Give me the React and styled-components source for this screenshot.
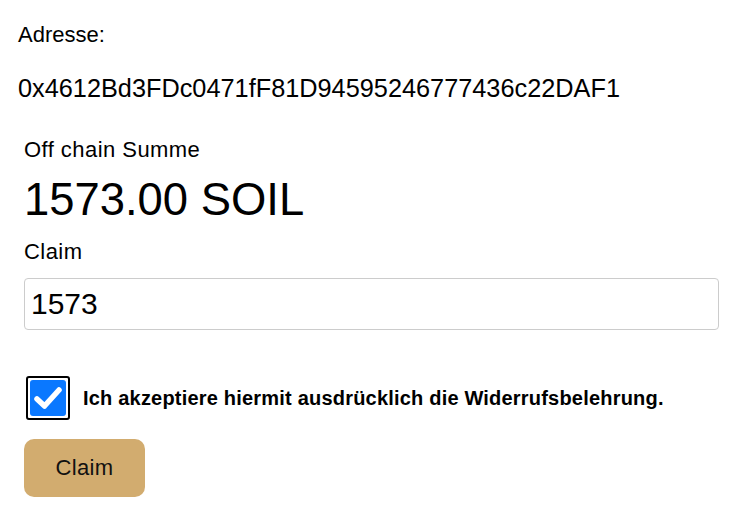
import { useState } from 'react';
import styled, { createGlobalStyle } from 'styled-components';

const GlobalStyle = createGlobalStyle`
  body {
    margin: 0;
    background: #ffffff;
    font-family: "Liberation Sans", Arial, sans-serif;
    color: #000000;
  }
`;

const Page = styled.div`
  display: flex;
  flex-direction: column;
`;

const AddressBlock = styled.div`
  padding-left: 18px;
`;

const FieldLabel = styled.div`
  margin-top: ${(p) => p.$top}px;
  font-size: 22px;
  line-height: 24px;
`;

const AddressText = styled.div`
  margin-top: 26px;
  font-size: 25.3px;
  line-height: 30px;
`;

const ClaimSection = styled.div`
  display: flex;
  flex-direction: column;
  align-items: flex-start;
  padding-left: 24px;
  width: 695px;
`;

const SmallLabel = styled.div`
  margin-top: ${(p) => p.$top}px;
  font-size: 22px;
  letter-spacing: 0.45px;
  line-height: 24px;
`;

const Amount = styled.div`
  margin-top: 12px;
  font-size: 45.4px;
  line-height: 52px;
`;

const AmountInput = styled.input`
  margin-top: 14px;
  box-sizing: border-box;
  width: 100%;
  height: 52px;
  padding: 0 6px;
  border: 1px solid #cccccc;
  border-radius: 4px;
  font-family: "Liberation Sans", Arial, sans-serif;
  font-size: 30px;
  color: #000000;
  outline: none;
`;

const ConsentRow = styled.label`
  margin-top: 46px;
  display: flex;
  align-items: center;
  gap: 13px;
  cursor: pointer;
`;

const CheckBox = styled.span`
  margin-left: 2px;
  box-sizing: border-box;
  width: 44px;
  height: 44px;
  padding: 2px;
  border: 2px solid #000000;
  border-radius: 3px;
  display: flex;
`;

const CheckFill = styled.span`
  flex: 1;
  border-radius: 3px;
  background: ${(p) => (p.$checked ? '#0a78ff' : '#ffffff')};
  display: flex;
  align-items: center;
  justify-content: center;
`;

const ConsentText = styled.span`
  font-size: 20px;
  letter-spacing: 0.2px;
  font-weight: bold;
  line-height: 24px;
`;

const ClaimButton = styled.button`
  margin-top: 19px;
  width: 121px;
  height: 58px;
  border: none;
  border-radius: 10px;
  background: #d2ac6f;
  color: #111111;
  font-family: "Liberation Sans", Arial, sans-serif;
  font-size: 22px;
  letter-spacing: 0.4px;
  cursor: pointer;
`;

export default function App() {
  const [claim, setClaim] = useState('1573');
  const [accepted, setAccepted] = useState(true);

  return (
    <Page>
      <GlobalStyle />
      <AddressBlock>
        <FieldLabel $top={23}>Adresse:</FieldLabel>
        <AddressText>0x4612Bd3FDc0471fF81D94595246777436c22DAF1</AddressText>
      </AddressBlock>
      <ClaimSection>
        <SmallLabel $top={35}>Off chain Summe</SmallLabel>
        <Amount>1573.00 SOIL</Amount>
        <SmallLabel $top={14}>Claim</SmallLabel>
        <AmountInput value={claim} onChange={(e) => setClaim(e.target.value)} />
        <ConsentRow onClick={() => setAccepted(!accepted)}>
          <CheckBox>
            <CheckFill $checked={accepted}>
              {accepted && (
                <svg width="28" height="24" viewBox="0 0 28 24">
                  <path d="M3 13 L10.5 20 L25 4" fill="none" stroke="#ffffff" strokeWidth="5.5" strokeLinecap="round" strokeLinejoin="round" />
                </svg>
              )}
            </CheckFill>
          </CheckBox>
          <ConsentText>Ich akzeptiere hiermit ausdrücklich die Widerrufsbelehrung.</ConsentText>
        </ConsentRow>
        <ClaimButton>Claim</ClaimButton>
      </ClaimSection>
    </Page>
  );
}
